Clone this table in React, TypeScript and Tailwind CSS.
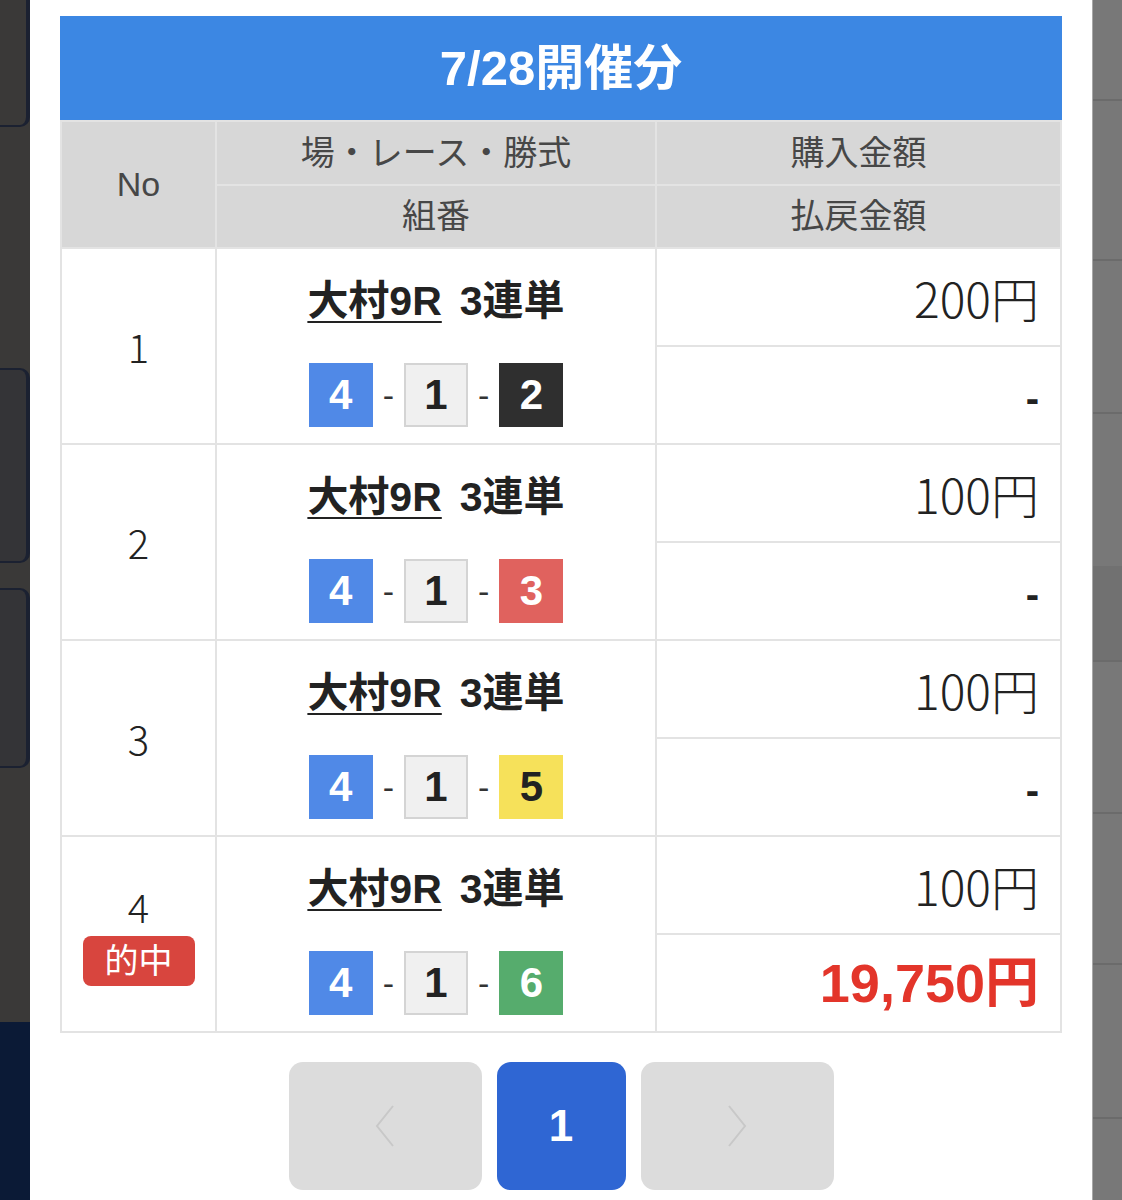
import React from "react";

const FONT = '"Liberation Sans", "Noto Sans CJK JP", sans-serif';

type Row = { no: string; third: string; thirdCls: string; amount: string; payout: string; hit?: boolean };

const rows: Row[] = [
  { no: "1", third: "2", thirdCls: "bg-[#2f2f2f] text-white", amount: "200円", payout: "-" },
  { no: "2", third: "3", thirdCls: "bg-[#e0625e] text-white", amount: "100円", payout: "-" },
  { no: "3", third: "5", thirdCls: "bg-[#f6e15a] text-[#222]", amount: "100円", payout: "-" },
  { no: "4", third: "6", thirdCls: "bg-[#56ac6d] text-white", amount: "100円", payout: "19,750円", hit: true },
];

function LeftStrip() {
  return (
    <div className="w-[30px] h-[1200px] bg-[#3a3938] flex flex-col shrink-0">
      <div className="h-[127px] border-r-[4px] border-b-[2px] border-[#1b2131] rounded-br-[10px]" />
      <div className="h-[241px]" />
      <div className="h-[195px] border-r-[4px] border-y-[2px] border-[#1b2131] rounded-r-[10px] bg-[#343437]" />
      <div className="h-[25px]" />
      <div className="h-[180px] border-r-[4px] border-y-[2px] border-[#1b2131] rounded-r-[10px] bg-[#343437]" />
      <div className="h-[254px]" />
      <div className="flex-1 bg-[#0b1a36]" />
    </div>
  );
}

function RightStrip() {
  const seg = (h: number, cls = "bg-[#787878]") => (
    <div className={`${cls} border-b-[2px] border-[#6b6b6b]`} style={{ height: h }} />
  );
  return (
    <div className="w-[30px] h-[1200px] shrink-0 flex flex-col border-l border-[#a8a8a8] bg-[#787878]">
      {seg(101)}
      {seg(160)}
      {seg(153)}
      <div className="h-[152px] bg-[#787878]" />
      {seg(96, "bg-[#717171]")}
      {seg(152)}
      {seg(151)}
      {seg(154)}
      <div className="flex-1 bg-[#787878]" />
    </div>
  );
}

function Box({ n, cls }: { n: string; cls: string }) {
  return (
    <div className={`w-[64px] h-[64px] flex items-center justify-center text-[42px] font-bold leading-none ${cls}`}>
      {n}
    </div>
  );
}

function Dash() {
  return <span className="text-[34px] text-[#333] leading-none">-</span>;
}

export default function App() {
  return (
    <div className="w-[1122px] h-[1200px] overflow-hidden flex bg-white" style={{ fontFamily: FONT }}>
      <LeftStrip />
      <div className="flex-1 bg-white px-[30px] pt-[16px] flex flex-col">
        <div className="h-[104px] bg-[#3c87e3] flex items-center justify-center text-white text-[49px] font-bold leading-none">
          7/28開催分
        </div>
        <div className="grid grid-cols-[153px_438px_1fr] grid-rows-[62px_61px_repeat(8,96px)] gap-[2px] p-[2px] bg-[#e3e3e3]">
          <div className="row-span-2 bg-[#d7d7d7] flex items-center justify-center text-[34px] text-[#474747]">No</div>
          <div className="bg-[#d7d7d7] flex items-center justify-center text-[34px] text-[#474747]">場・レース・勝式</div>
          <div className="bg-[#d7d7d7] flex items-center justify-center text-[34px] text-[#474747]">購入金額</div>
          <div className="bg-[#d7d7d7] flex items-center justify-center text-[34px] text-[#474747]">組番</div>
          <div className="bg-[#d7d7d7] flex items-center justify-center text-[34px] text-[#474747]">払戻金額</div>
          {rows.map((r) => (
            <React.Fragment key={r.no}>
              <div className="row-span-2 bg-white flex flex-col items-center justify-center">
                <span
                  className={`font-['Noto_Sans_CJK_JP',sans-serif] text-[40px] font-light text-[#222] leading-none ${
                    r.hit ? "mt-[4px]" : ""
                  }`}
                >
                  {r.no}
                </span>
                {r.hit && (
                  <span className="mt-[10px] w-[112px] h-[50px] rounded-[8px] bg-[#d8453e] text-white text-[34px] flex items-center justify-center leading-none">
                    的中
                  </span>
                )}
              </div>
              <div className="row-span-2 bg-white flex flex-col items-center pt-[27px]">
                <div className="text-[41px] font-bold text-[#222] leading-[50px] flex items-baseline">
                  <span className="underline decoration-[2px] underline-offset-[6px]">大村9R</span>
                  <span className="ml-[18px]">3連単</span>
                </div>
                <div className="mt-[37px] flex items-center gap-[10px]">
                  <Box n="4" cls="bg-[#5089e7] text-white" />
                  <Dash />
                  <Box n="1" cls="bg-[#f0f0f0] text-[#222] border-2 border-[#d4d4d4]" />
                  <Dash />
                  <Box n={r.third} cls={r.thirdCls} />
                </div>
              </div>
              <div className="bg-white flex items-center justify-end pr-[21px] font-['Noto_Sans_CJK_JP',sans-serif] text-[48px] font-light text-[#222] leading-none">
                {r.amount}
              </div>
              <div
                className={`bg-white flex items-center justify-end pr-[21px] font-bold leading-none ${
                  r.hit ? "text-[54px] text-[#e3352a]" : "text-[40px] text-[#222] pt-[6px]"
                }`}
              >
                {r.payout}
              </div>
            </React.Fragment>
          ))}
        </div>
        <div className="mt-[29px] flex justify-center gap-[15px]">
          <div className="w-[193px] h-[128px] rounded-[14px] bg-[#dcdcdc] flex items-center justify-center">
            <svg width="24" height="44" viewBox="0 0 24 44" fill="none">
              <polyline points="20,2 4,22 20,42" stroke="#c8c8c8" strokeWidth="2" />
            </svg>
          </div>
          <div className="w-[129px] h-[128px] rounded-[14px] bg-[#2f66d3] flex items-center justify-center text-white text-[44px] font-bold">
            1
          </div>
          <div className="w-[193px] h-[128px] rounded-[14px] bg-[#dcdcdc] flex items-center justify-center">
            <svg width="24" height="44" viewBox="0 0 24 44" fill="none">
              <polyline points="4,2 20,22 4,42" stroke="#c8c8c8" strokeWidth="2" />
            </svg>
          </div>
        </div>
      </div>
      <RightStrip />
    </div>
  );
}
